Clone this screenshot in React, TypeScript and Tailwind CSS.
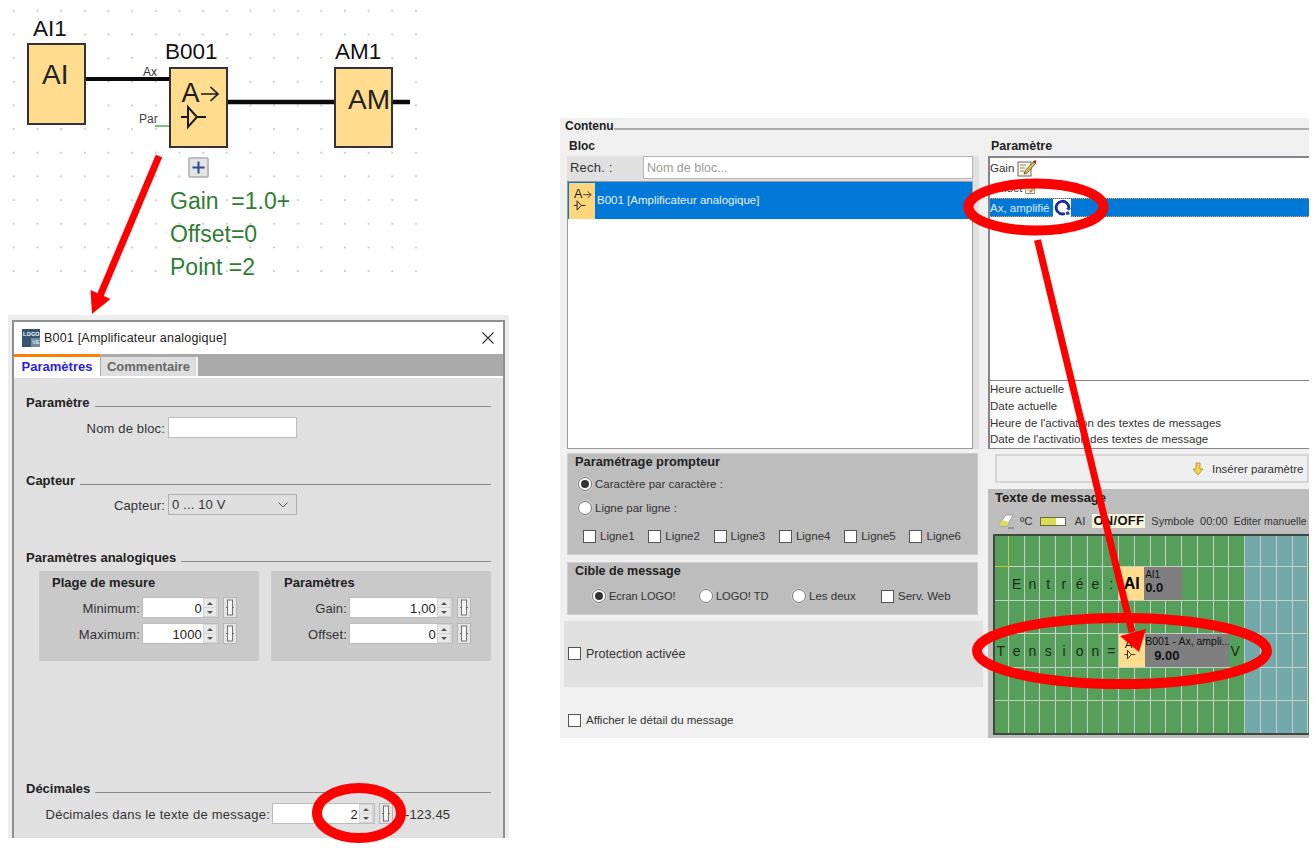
import React from "react";

const AmpGlyph = ({ className = "" }: { className?: string }) => (
  <svg viewBox="0 0 55 77" className={className}>
    <text x="10.5" y="33" fontSize="27" fontFamily="Liberation Sans, Arial, sans-serif" fill="#1a1a1a">A</text>
    <path d="M30 25H47M39.5 18l7.5 7-7.5 7" fill="none" stroke="#1a1a1a" strokeWidth="1.7" />
    <path d="M10 48H17M26 48H35M17 38V58L26 48Z" fill="none" stroke="#1a1a1a" strokeWidth="2" />
  </svg>
);

const Bracket = () => (
  <svg viewBox="0 0 14 21" className="w-[14px] h-[21px] shrink-0">
    <rect x="0.5" y="0.5" width="13" height="20" fill="#e4e4e4" stroke="#b5b5b5" />
    <rect x="4.5" y="3" width="5" height="15" fill="#f4f4f4" stroke="#555" strokeWidth="0.8" />
    <path d="M3 10.5H4.5M9.5 10.5H11" stroke="#555" strokeWidth="0.8" />
  </svg>
);

const Spinner = ({ value, inputW }: { value: string; inputW: number }) => (
  <div className="flex h-[21px] border border-[#bcbcbc] bg-[#d4d4d4] shrink-0">
    <div
      className="bg-white h-full flex items-center justify-end pr-px pt-[2px] text-[#222]"
      style={{ width: inputW }}
    >
      {value}
    </div>
    <div className="w-[15px] flex flex-col gap-px py-px pl-px pr-[2px]">
      <div className="flex-1 bg-[#e8e8e8] flex items-center justify-center">
        <div className="w-0 h-0 border-x-[3px] border-x-transparent border-b-[3px] border-b-[#555]" />
      </div>
      <div className="flex-1 bg-[#e8e8e8] flex items-center justify-center">
        <div className="w-0 h-0 border-x-[3px] border-x-transparent border-t-[3px] border-t-[#555]" />
      </div>
    </div>
  </div>
);

const Legend = ({ title, className = "" }: { title: string; className?: string }) => (
  <div className={`flex items-start gap-[5px] h-4 ${className}`}>
    <span className="font-bold text-[13px] tracking-normal leading-4 pt-px text-[#222] whitespace-nowrap">{title}</span>
    <div className="flex-1 h-px bg-[#8a8a8a] self-end mb-[3px]" />
  </div>
);

const SpinRow = ({
  label,
  value,
  labelW,
  inputW,
  className = "",
  labelClass = "",
}: {
  label: string;
  value: string;
  labelW: number;
  inputW: number;
  className?: string;
  labelClass?: string;
}) => (
  <div className={`flex items-center h-[21px] ${className}`}>
    <div className={`text-right whitespace-nowrap text-[#333] pr-[2px] pt-[2px] ${labelClass}`} style={{ width: labelW }}>
      {label}
    </div>
    <Spinner value={value} inputW={inputW} />
    <div className="ml-1 flex">
      <Bracket />
    </div>
  </div>
);

const Radio = ({ on = false }: { on?: boolean }) => (
  <div className="w-[14px] h-[14px] rounded-full bg-white border border-[#777] shadow-[0_0_0_1px_#ccc] flex items-center justify-center shrink-0">
    {on && <div className="w-2 h-2 rounded-full bg-[#333]" />}
  </div>
);

const Check = () => <div className="w-[13px] h-[13px] bg-white border border-[#555] shrink-0" />;

const CheckLabel = ({ label, className = "" }: { label: string; className?: string }) => (
  <div className={`flex items-center ${className}`}>
    <Check />
    <span className="whitespace-nowrap">{label}</span>
  </div>
);

const NoteIcon = ({ className = "" }: { className?: string }) => (
  <svg viewBox="0 0 20 18" className={className}>
    <rect x="1" y="3" width="13" height="14" fill="#fbf6d8" stroke="#666" />
    <path d="M3 6h6M3 9h5M3 12h4" stroke="#888" />
    <path d="M7 15l1-3L17 2l2 2-9 10z" fill="#e6c04a" stroke="#333" strokeWidth="0.7" />
    <path d="M16 3l2-2 1.5 1.5-2 2z" fill="#b3202a" />
  </svg>
);

const Diagram = () => (
  <div className="absolute left-0 top-0 w-[420px] h-[285px] bg-[radial-gradient(circle,#a0a0a0_0.5px,transparent_0.9px)] bg-[length:23.67px_23.67px] bg-[position:2px_-1px]">
    <svg viewBox="0 0 420 285" className="absolute inset-0 w-[420px] h-[285px]">
      <path d="M85 79H171" stroke="#0a0a0a" strokeWidth="4" />
      <path d="M227 102H337" stroke="#0a0a0a" strokeWidth="4.5" />
      <path d="M392 102H410" stroke="#0a0a0a" strokeWidth="4.5" />
      <path d="M155 126H169" stroke="#4caf50" strokeWidth="1.5" />
    </svg>
    <div className="absolute left-[33px] top-[16px] text-[22.5px] leading-[26px] text-[#111]">AI1</div>
    <div className="absolute left-[165px] top-[39px] text-[22.5px] leading-[26px] text-[#111]">B001</div>
    <div className="absolute left-[335px] top-[39px] text-[22.5px] leading-[26px] text-[#111]">AM1</div>
    <div className="absolute left-[27px] top-[43px] w-[59px] h-[82px] bg-[#ffdc8e] border-2 border-[#333] text-[28px] leading-[32px] pt-[14px] pl-[13px] text-[#222]">
      AI
    </div>
    <div className="absolute left-[169px] top-[67px] w-[59px] h-[81px] bg-[#ffdc8e] border-2 border-[#333]">
      <AmpGlyph className="w-[55px] h-[77px]" />
    </div>
    <div className="absolute left-[334px] top-[67px] w-[59px] h-[81px] bg-[#ffdc8e] border-2 border-[#333] text-[28px] leading-[32px] pt-[15px] pl-[12px] text-[#222]">
      AM
    </div>
    <div className="absolute left-[143px] top-[65px] text-[12px] leading-[14px] text-[#333]">Ax</div>
    <div className="absolute left-[139px] top-[112px] text-[12px] leading-[14px] text-[#444]">Par</div>
    <div className="absolute left-[188px] top-[157px] w-[21px] h-[21px] rounded-[2px] bg-[#e4e4e4] border-2 border-[#bdbdbd] flex items-center justify-center">
      <svg viewBox="0 0 13 13" className="w-[13px] h-[13px]">
        <path d="M6.5 0.5V12.5M0.5 6.5H12.5" stroke="#2b4a94" strokeWidth="2" />
      </svg>
    </div>
    <div className="absolute left-[170px] top-[185px] text-[23px] text-[#2e7d32] leading-[33px] whitespace-pre">
      <div>Gain  =1.0+</div>
      <div>Offset=0</div>
      <div>Point =2</div>
    </div>
  </div>
);

const Dialog = () => (
  <div className="absolute left-[8px] top-[315px] w-[501px] h-[523px] bg-[#ededed] pt-[5px] px-[4px] overflow-hidden">
    <div className="h-[530px] border-x-[2px] border-t-[2px] border-[#8f8f8f] bg-[#e0e0e0] text-[13px] tracking-[0.15px] leading-[16px] text-[#333]">
      <div className="h-[32px] bg-white flex items-center pl-[8px] pr-[9px]">
        <svg viewBox="0 0 18 18" className="w-[18px] h-[18px] mr-[4px]">
          <rect width="18" height="18" fill="#35566e" />
          <rect x="9" y="9" width="9" height="9" fill="#6f8ba0" />
          <text x="1" y="7" fontSize="5.5" fill="#fff" fontWeight="bold" fontFamily="Liberation Sans">LOGO</text>
          <text x="10" y="15" fontSize="5.5" fill="#fff" fontFamily="Liberation Sans">VE</text>
        </svg>
        <span className="text-[#222] text-[12.5px] tracking-[0.2px]">B001 [Amplificateur analogique]</span>
        <svg viewBox="0 0 12 12" className="w-[12px] h-[12px] ml-auto">
          <path d="M0.5 0.5L11.5 11.5M11.5 0.5L0.5 11.5" stroke="#333" strokeWidth="1.1" fill="none" />
        </svg>
      </div>
      <div className="h-[22px] bg-[#aaaaaa] flex items-stretch border-b-2 border-white box-content">
        <div className="w-[86px] bg-white border-t-[3px] border-[#ff8000] font-bold tracking-normal text-[#2b1fe0] flex items-center justify-center">
          Paramètres
        </div>
        <div className="w-[97px] ml-px mt-[3px] bg-[#dedede] border-r-2 border-[#f4f4f4] font-bold tracking-normal text-[#666] flex items-center justify-center">
          Commentaire
        </div>
      </div>
      <div className="pl-[12px] pr-[12px]">
        <Legend title="Paramètre" className="mt-[16px]" />
        <div className="flex items-center h-[21px] mt-[7px]">
          <div className="w-[141px] text-right pr-[2px] pt-[2px] whitespace-nowrap">Nom de bloc:</div>
          <div className="w-[129px] h-[21px] ml-[1px] bg-white border border-[#bcbcbc]" />
        </div>
        <Legend title="Capteur" className="mt-[34px]" />
        <div className="flex items-center h-[21px] mt-[6px]">
          <div className="w-[141px] text-right pr-[2px] pt-[2px]">Capteur:</div>
          <div className="w-[129px] h-[21px] ml-[1px] pt-[1px] bg-[#dfdfdf] border border-[#b0b0b0] flex items-center pl-[3px] pr-[8px]">
            0 ... 10 V
            <svg viewBox="0 0 10 6" className="w-[10px] h-[6px] ml-auto">
              <path d="M0.5 0.5L5 5L9.5 0.5" fill="none" stroke="#555" />
            </svg>
          </div>
        </div>
        <Legend title="Paramètres analogiques" className="mt-[34px]" />
        <div className="flex gap-[12px] mt-[6px] ml-[13px]">
          <div className="w-[220px] h-[90px] bg-[#c9c9c9] pt-[4px]">
            <div className="font-bold tracking-normal pl-[13px] text-[#222] h-[16px]">Plage de mesure</div>
            <SpinRow label="Minimum:" value="0" labelW={103} inputW={60} className="mt-[6px]" />
            <SpinRow label="Maximum:" value="1000" labelW={103} inputW={60} className="mt-[5px]" />
          </div>
          <div className="w-[220px] h-[90px] bg-[#c9c9c9] pt-[4px]">
            <div className="font-bold tracking-normal pl-[13px] text-[#222] h-[16px]">Paramètres</div>
            <SpinRow label="Gain:" value="1,00" labelW={78} inputW={87} className="mt-[6px]" />
            <SpinRow label="Offset:" value="0" labelW={78} inputW={87} className="mt-[5px]" />
          </div>
        </div>
        <Legend title="Décimales" className="mt-[119px]" />
        <div className="flex items-center h-[21px] mt-[7px]">
          <SpinRow
            label="Décimales dans le texte de message:"
            value="2"
            labelW={246}
            inputW={86}
            labelClass="tracking-[0.24px]"
          />
          <span className="ml-[12px] pt-[2px]">-123.45</span>
        </div>
      </div>
    </div>
  </div>
);

const gridCells = Array.from({ length: 120 }, (_, i) => i);

const Message = () => (
  <div className="relative w-[316px] h-[201px] bg-[#559f5a]">
    <div className="absolute inset-0 grid grid-cols-[repeat(20,15.78px)] grid-rows-[repeat(6,33.4px)]">
      {gridCells.map((i) => (
        <div
          key={i}
          className={`border-r border-b ${i === 0 ? "border-[#c8c83c]" : "border-[#c4d0c4]"} ${i % 20 >= 16 ? "bg-[#74a9ac]" : "bg-[#559f5a]"}`}
        />
      ))}
    </div>
    <div className="absolute inset-0 grid grid-cols-[repeat(20,15.78px)] grid-rows-[repeat(6,33.4px)] text-[14px] text-[#1b2a1b]">
      <div className="col-start-2 row-start-2 flex items-center justify-center">E</div>
      <div className="col-start-3 row-start-2 flex items-center justify-center">n</div>
      <div className="col-start-4 row-start-2 flex items-center justify-center">t</div>
      <div className="col-start-5 row-start-2 flex items-center justify-center">r</div>
      <div className="col-start-6 row-start-2 flex items-center justify-center">é</div>
      <div className="col-start-7 row-start-2 flex items-center justify-center">e</div>
      <div className="col-start-8 row-start-2 flex items-center justify-center">:</div>
      <div className="col-start-9 col-span-4 row-start-2 flex bg-[#7f7f7f] mb-px">
        <div className="w-[25px] bg-[#ffdc8e] flex items-center justify-center font-bold text-[16px] text-black">AI</div>
        <div className="pl-px leading-none">
          <div className="text-[10px] mt-[3px] text-[#111]">AI1</div>
          <div className="text-[13px] font-bold mt-[1px] text-[#111]">0.0</div>
        </div>
      </div>
      <div className="col-start-1 row-start-4 flex items-center justify-center">T</div>
      <div className="col-start-2 row-start-4 flex items-center justify-center">e</div>
      <div className="col-start-3 row-start-4 flex items-center justify-center">n</div>
      <div className="col-start-4 row-start-4 flex items-center justify-center">s</div>
      <div className="col-start-5 row-start-4 flex items-center justify-center">i</div>
      <div className="col-start-6 row-start-4 flex items-center justify-center">o</div>
      <div className="col-start-7 row-start-4 flex items-center justify-center">n</div>
      <div className="col-start-8 row-start-4 flex items-center justify-center">=</div>
      <div className="col-start-9 col-span-7 row-start-4 flex bg-[#7f7f7f] mb-px overflow-hidden">
        <div className="w-[26px] bg-[#ffdc8e] shrink-0">
          <AmpGlyph className="w-[26px] h-[33px]" />
        </div>
        <div className="leading-none whitespace-nowrap">
          <div className="text-[10.5px] mt-[2px] text-[#111]">B001 - Ax, ampli...</div>
          <div className="text-[13px] font-bold mt-[2px] ml-[9px] text-[#111]">9.00</div>
        </div>
      </div>
      <div className="col-start-16 row-start-4 flex items-center justify-start pl-[1px]">V</div>
    </div>
    <div className="absolute inset-0 border-l-2 border-t-2 border-b-2 border-[#3d4a3d]" />
  </div>
);

const RightPanel = () => (
  <div className="absolute left-[560px] top-[118px] w-[749px] h-[620px] bg-[#f0f0f0] overflow-hidden text-[11.5px] leading-[14px] text-[#333]">
    <div className="flex items-end h-[15px] pl-[5px]">
      <span className="font-bold text-[12px] text-[#222]">Contenu</span>
      <div className="flex-1 h-[2px] bg-[#adadad] mb-[3px]" />
    </div>
    <div className="flex mt-[2px]">
      <div className="w-[424px] shrink-0 pl-[7px]">
        <div className="font-bold text-[12px] h-[16px] pl-[2px] pt-[4px] text-[#222]">Bloc</div>
        <div className="mt-[5px] w-[412px] h-[293px] bg-[#e0e0e0]">
          <div className="flex items-center h-[23px]">
            <div className="w-[76px] pl-[3px] text-[13px] tracking-[0.2px]">Rech. :</div>
            <div className="w-[330px] h-[23px] bg-white border border-[#b4b4b4] pl-[3px] text-[12.5px] text-[#9a9a9a] flex items-center">
              Nom de bloc...
            </div>
          </div>
          <div className="mt-[2px] w-[406px] h-[268px] bg-white border border-[#9b9b9b]">
            <div className="h-[37px] bg-[#0078d7] flex items-center text-[#e8f2fb]">
              <div className="w-[26px] h-[36px] bg-[#ffd67c] ml-px mr-[2px]">
                <AmpGlyph className="w-[26px] h-[36px]" />
              </div>
              <span className="mb-[2px]">B001 [Amplificateur analogique]</span>
            </div>
          </div>
        </div>
        <div className="mt-[4px] w-[411px] h-[102px] bg-[#bdbdbd] border border-[#cfcfcf] pl-[7px] pt-[1px]">
          <div className="font-bold text-[12.8px] h-[16px] text-[#222]">Paramétrage prompteur</div>
          <div className="flex items-center gap-[3px] mt-[4px] ml-[3px] h-[18px]">
            <Radio on />
            Caractère par caractère :
          </div>
          <div className="flex items-center gap-[3px] mt-[6px] ml-[3px] h-[18px]">
            <Radio />
            Ligne par ligne :
          </div>
          <div className="flex mt-[12px] ml-[8px] h-[14px]">
            {["Ligne1", "Ligne2", "Ligne3", "Ligne4", "Ligne5", "Ligne6"].map((l) => (
              <CheckLabel key={l} label={l} className="w-[65.3px] gap-[4px]" />
            ))}
          </div>
        </div>
        <div className="mt-[7px] w-[411px] h-[53px] bg-[#bdbdbd] border border-[#cfcfcf] pl-[7px] pt-[1px]">
          <div className="font-bold text-[12.5px] h-[16px] text-[#222]">Cible de message</div>
          <div className="flex items-center mt-[8px] ml-[17px] h-[16px]">
            <div className="flex items-center gap-[3px] w-[107px]">
              <Radio on />
              <span className="text-[11px]">Ecran LOGO!</span>
            </div>
            <div className="flex items-center gap-[3px] w-[93px]">
              <Radio />
              <span className="text-[11px]">LOGO! TD</span>
            </div>
            <div className="flex items-center gap-[3px] w-[89px]">
              <Radio />
              Les deux
            </div>
            <CheckLabel label="Serv. Web" className="gap-[4px]" />
          </div>
        </div>
        <div className="mt-[6px] -ml-[3px] w-[419px] h-[66px] bg-[#e0e0e0] flex items-center pl-[4px] pb-[1px]">
          <CheckLabel label="Protection activée" className="text-[12.5px] gap-[5px]" />
        </div>
        <div className="mt-[26px] -ml-[3px] pl-[4px] flex">
          <CheckLabel label="Afficher le détail du message" className="gap-[5px]" />
        </div>
      </div>
      <div className="flex-1 min-w-0 ml-[4px]">
        <div className="font-bold text-[12.5px] h-[16px] pl-[3px] pt-[4px] text-[#222]">Paramètre</div>
        <div className="mt-[5px] h-[224px] bg-white border-l-2 border-t-2 border-[#84848c]">
          <div className="h-[20px] flex items-center gap-[3px]">
            Gain
            <NoteIcon className="w-[20px] h-[18px]" />
          </div>
          <div className="h-[20px] flex items-center gap-[3px] pl-[2px]">
            Offset
            <NoteIcon className="w-[14px] h-[14px]" />
          </div>
          <div className="h-[19px] bg-[#0078d7] border-y border-dotted border-[#f0a040] flex items-center gap-[4px] text-[#dcecfa]">
            Ax, amplifié
            <div className="w-[18px] h-[18px] bg-white flex items-center justify-center">
              <svg viewBox="0 0 18 18" className="w-[17px] h-[17px]">
                <path d="M11.5 15.3A6.7 6.7 0 1 1 15.6 9.5" fill="none" stroke="#1b2a9c" strokeWidth="3" />
                <path d="M15.6 12.2l-3.2-2.7 6 .2z" fill="#1b2a9c" />
                <circle cx="14.5" cy="15" r="2" fill="#3a49b8" />
              </svg>
            </div>
          </div>
        </div>
        <div className="h-[69px] bg-white border-l-2 border-t border-b border-[#84848c] text-[#333]">
          <div className="h-[17px] leading-[17px]">Heure actuelle</div>
          <div className="h-[17px] leading-[17px]">Date actuelle</div>
          <div className="h-[16px] leading-[16px]">Heure de l'activation des textes de messages</div>
          <div className="h-[17px] leading-[17px]">Date de l'activation des textes de message</div>
        </div>
        <div className="ml-[7px] mt-[5px] h-[29px] bg-[#efefef] border-2 border-[#d4d4d4] flex items-center pl-[195px] whitespace-nowrap">
          <svg viewBox="0 0 12 14" className="w-[12px] h-[14px] mr-[4px] shrink-0">
            <path d="M4 1H8V7H11L6 13L1 7H4Z" fill="#f7d44c" stroke="#a98a1c" strokeWidth="0.8" />
          </svg>
          <span className="ml-[4px]">Insérer paramètre</span>
        </div>
        <div className="mt-[6px] h-[249px] bg-[#bdbdbd] pl-[5px] overflow-hidden">
          <div className="font-bold text-[13px] h-[16px] pl-[2px] pt-[2px] text-[#222]">Texte de message</div>
          <div className="flex items-center h-[16px] mt-[8px] pl-[5px] whitespace-nowrap">
            <svg viewBox="0 0 16 16" className="w-[16px] h-[16px] shrink-0">
              <path d="M1 11L8 2H15L9 13H3Z" fill="#fff" stroke="#888" strokeWidth="0.7" />
              <path d="M1 11L4 7L11 9L9 13H3Z" fill="#dcdc50" />
              <path d="M10 15H16" stroke="#666" />
            </svg>
            <span className="ml-[6px]">ºC</span>
            <div className="ml-[7px] w-[26px] h-[9px] border border-[#6a6a3c] bg-[#dcdc50] flex justify-end shrink-0">
              <div className="w-[9px] bg-white" />
            </div>
            <span className="ml-[9px]">AI</span>
            <span className="ml-[7px] px-[1px] bg-[#f5f5dc] font-bold text-[13px] text-[#111] tracking-[0.3px]">ON/OFF</span>
            <span className="ml-[6px] text-[11px]">Symbole</span>
            <span className="ml-[6px] text-[11px]">00:00</span>
            <span className="ml-[6px] text-[10.5px]">Editer manuelle</span>
          </div>
          <div className="mt-[5px]">
            <Message />
          </div>
        </div>
      </div>
    </div>
  </div>
);

const Annotations = () => (
  <svg viewBox="0 0 1315 850" className="absolute inset-0 w-[1315px] h-[850px] pointer-events-none">
    <g fill="none" stroke="#ff0000">
      <ellipse cx="1036" cy="207" rx="67.5" ry="23.5" strokeWidth="10" />
      <ellipse cx="1122" cy="651" rx="145" ry="33" strokeWidth="10" />
      <ellipse cx="359" cy="813" rx="42" ry="25" strokeWidth="10" />
      <path d="M159 156L100 296" strokeWidth="7" />
      <path d="M1037.5 240L1132 632" strokeWidth="7" />
    </g>
    <g fill="#ff0000">
      <path d="M92 314L90.5 290L110.5 299Z" />
      <path d="M1139 652L1120 636L1146 629Z" />
    </g>
  </svg>
);

export default function App() {
  return (
    <div className="relative w-[1315px] h-[850px] bg-white overflow-hidden font-['Liberation_Sans',Arial,sans-serif]">
      <Diagram />
      <Dialog />
      <RightPanel />
      <Annotations />
    </div>
  );
}
